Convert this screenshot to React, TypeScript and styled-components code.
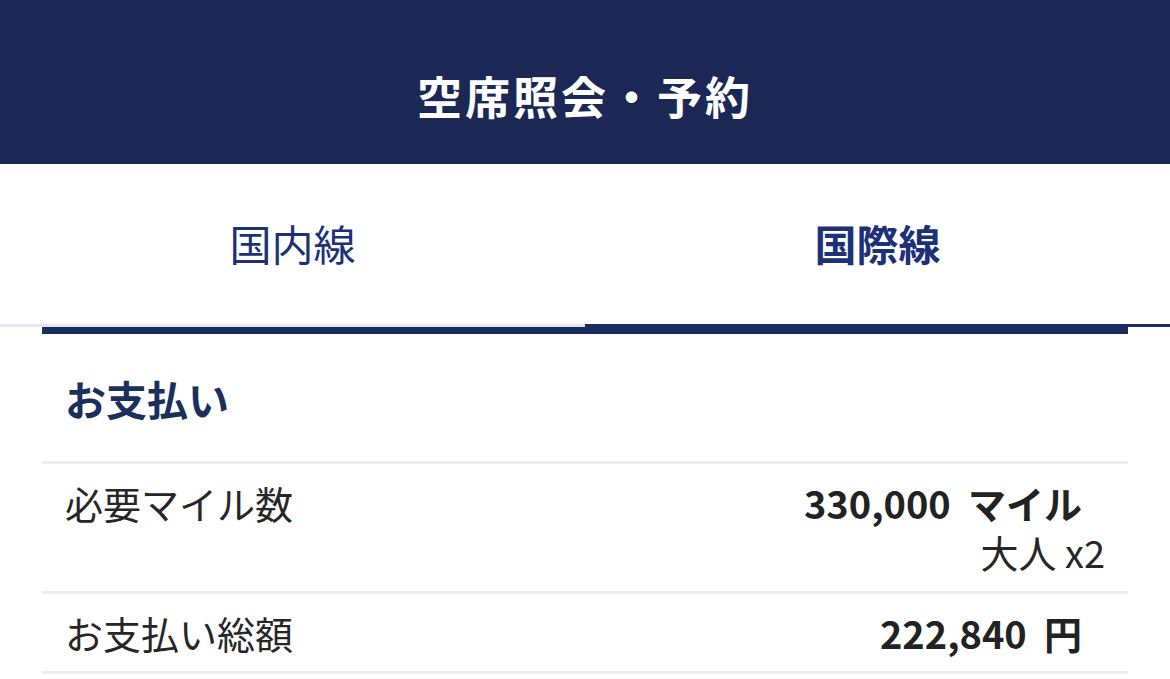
import React from "react";
import styled, { createGlobalStyle } from "styled-components";

const GlobalStyle = createGlobalStyle`
  html, body {
    margin: 0;
    padding: 0;
    background: #ffffff;
  }
  body {
    font-family: "Noto Sans CJK JP", "Noto Sans", sans-serif;
    color: #222222;
  }
`;

const Page = styled.div`
  width: 1170px;
  min-height: 679px;
  background: #ffffff;
`;

const Header = styled.header`
  height: 164px;
  box-sizing: border-box;
  padding-top: 27px;
  background: #1b2754;
  display: flex;
  align-items: center;
  justify-content: center;
`;

const Title = styled.h1`
  margin: 0;
  font-size: 45px;
  font-weight: 700;
  letter-spacing: 3px;
  color: #ffffff;
`;

const Tabs = styled.nav`
  display: flex;
`;

const Tab = styled.div<{ active?: boolean }>`
  flex: 1;
  height: 163px;
  box-sizing: border-box;
  padding-bottom: 4px;
  display: flex;
  align-items: center;
  justify-content: center;
  font-size: 42px;
  font-weight: ${(props) => (props.active ? 700 : 400)};
  color: #1c3178;
  border-bottom: 3px solid ${(props) => (props.active ? "#1a2d6b" : "#e2e7f1")};
`;

const Card = styled.section`
  margin: 0 42px;
  border-top: 7px solid #172d5e;
`;

const CardTitle = styled.h2`
  margin: 0;
  height: 130px;
  box-sizing: border-box;
  padding: 0 23px;
  display: flex;
  align-items: center;
  font-size: 41px;
  font-weight: 700;
  color: #1a2f5a;
  border-bottom: 3px solid #ededed;
`;

const Row = styled.div`
  display: flex;
  justify-content: space-between;
  align-items: flex-start;
  padding: 15px 23px 14px;
  border-bottom: 3px solid #ededed;
`;

const Label = styled.div`
  font-size: 38px;
  line-height: 48px;
  color: #262626;
`;

const Values = styled.div`
  display: flex;
  flex-direction: column;
  align-items: flex-end;
`;

const Amount = styled.div`
  font-size: 38px;
  line-height: 48px;
  font-weight: 700;
  color: #222222;
  margin-right: 23px;
  white-space: pre;
`;

const Note = styled.div`
  font-size: 38px;
  line-height: 50px;
  color: #262626;
`;

const payments = [
  { label: "必要マイル数", amount: "330,000  マイル", note: "大人 x2" },
  { label: "お支払い総額", amount: "222,840  円" },
];

const App = () => {
  return (
    <Page>
      <GlobalStyle />
      <Header>
        <Title>空席照会・予約</Title>
      </Header>
      <Tabs>
        <Tab>国内線</Tab>
        <Tab active>国際線</Tab>
      </Tabs>
      <Card>
        <CardTitle>お支払い</CardTitle>
        {payments.map((item) => (
          <Row key={item.label}>
            <Label>{item.label}</Label>
            <Values>
              <Amount>{item.amount}</Amount>
              {item.note && <Note>{item.note}</Note>}
            </Values>
          </Row>
        ))}
      </Card>
    </Page>
  );
};

export default App;
